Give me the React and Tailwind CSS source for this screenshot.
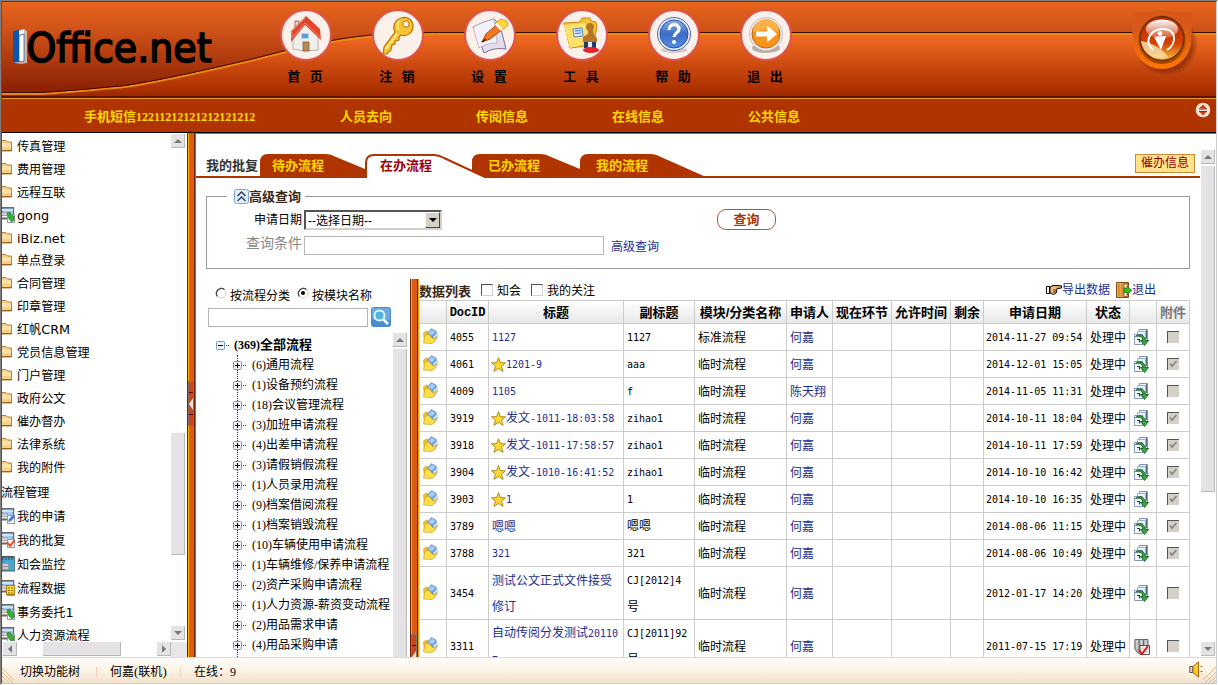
import React from "react";

/* Splits a string in CJK and Latin runs so that each gets its own face. */
function Mixed({ children, latin }) {
  const parts = String(children).match(/[\x20-\x7e]+|[^\x20-\x7e]+/g) || [];
  return parts.map((p, i) =>
    /^[\x20-\x7e]/.test(p) ? (
      <span key={i} className={latin}>{p}</span>
    ) : (
      <span key={i}>{p}</span>
    )
  );
}
const MONO = "whitespace-pre font-['DejaVu_Sans_Mono',monospace] text-[10px]";
const SERIF = "font-['Liberation_Serif',serif] text-[12px]";
const VERD = "font-['DejaVu_Sans',sans-serif] text-[12.8px]";

/* ---------- header icons ---------- */
const HomeIcon = () => (
  <svg width="34" height="40" viewBox="0 0 34 40">
    <path d="M4 20 L16 8 L29 20 V35 L16 36 L4 34Z" fill="#f1efec" stroke="#b5aea6" />
    <path d="M6 6h4v10l-4 3z" fill="#d9d4cf" stroke="#a33" strokeWidth=".7" />
    <path d="M2 16 V27 L16 10 L32 25 L31 14 L17 1Z" fill="#e2452c" />
    <path d="M16 3 L3 16 V23 L16 8 L31 22" fill="none" stroke="#f58a6c" />
    <rect x="12.500" y="18.500" width="7" height="5" fill="#5a9be0" stroke="#b9d4ee" />
    <rect x="14" y="27" width="6" height="9" fill="#b88a58" stroke="#7b5a38" strokeWidth=".7" />
  </svg>
);
const KeyIcon = () => (
  <svg width="34" height="40" viewBox="0 0 34 40">
    <path d="M20 3c7-2 12 2 12 8 0 7-6 11-12 9l-2 2v3l-4 1v3l-3 1-1 5-4 4H2l1-7L14 17c-3-6 0-12 6-14z" fill="#f6c431" stroke="#b87408" strokeWidth="1.200" />
    <path d="M5 34 L16 19M18 6c-2 3-2 6 0 9" stroke="#fff0a0" strokeWidth="1.500" fill="none" />
    <circle cx="25" cy="9" r="3.200" fill="#fdeeda" stroke="#b87408" />
  </svg>
);
const SetIcon = () => (
  <svg width="40" height="40" viewBox="0 0 40 40">
    <path d="M3 12 Q12 7 24 4 L30 10 L36 34 Q24 32 14 38 Q10 24 3 12Z" fill="#e2ddec" stroke="#776f93" />
    <path d="M3 12 Q12 7 24 4 L27 28 Q16 28 9 33Z" fill="#f4f1f8" stroke="#9d96b4" strokeWidth=".6" />
    <path d="M12 27 L16 19 29 8 34 13 20 24Z" fill="#f17a22" stroke="#a84008" />
    <path d="M25 8 L31 4 37 6 38 10 34 14 31 14Z" fill="#ffd23c" stroke="#c48006" strokeWidth=".6" />
    <path d="M26 9l6 6" stroke="#fff" strokeWidth="2.500" />
    <path d="M12 27l4-3" stroke="#43250f" strokeWidth="1.500" />
  </svg>
);
const ToolIcon = () => (
  <svg width="40" height="40" viewBox="0 0 40 40">
    <path d="M2 8 L18 7 L20 3 L28 3 L29 6 L34 7 L35 12 L31 30 L8 33Z" fill="#f6c53a" stroke="#c8870e" />
    <path d="M2 10 L24 8 L29 28 L8 33Z" fill="#ffe06a" />
    <path d="M11 14l9-1 1 8-9 1z" fill="#dbe9fb" stroke="#5a86c4" />
    <path d="M13 16l6-.5M13 18.500l6-.5" stroke="#3a6cc0" />
    <circle cx="28" cy="12" r="4" fill="#b87528" />
    <path d="M26 15h5l1 5 3 3v4H21v-5l5-3z" fill="#b87528" />
    <path d="M22 27h12v6H22z" fill="#223a6c" />
    <path d="M26 27h4v6h-4z" fill="#e8e8f0" />
    <ellipse cx="29" cy="35" rx="8" ry="3" fill="#e8232b" />
  </svg>
);
const HelpIcon = () => (
  <svg width="40" height="40" viewBox="0 0 40 40">
    <defs><linearGradient id="hb" x1="0" y1="0" x2="0" y2="1"><stop offset="0" stopColor="#8fb2e8" /><stop offset=".5" stopColor="#3c6ac4" /><stop offset="1" stopColor="#5a90e4" /></linearGradient></defs>
    <ellipse cx="20" cy="35" rx="13" ry="3" fill="#d8c8c4" />
    <circle cx="20" cy="19" r="16.500" fill="#e8edf6" stroke="#4a6cb0" />
    <circle cx="20" cy="19" r="14" fill="url(#hb)" stroke="#2b52a4" />
    <path d="M15 15c0-7 10-7 10-1 0 4-5 4-5 8" fill="none" stroke="#fff" strokeWidth="3.200" />
    <circle cx="20" cy="27" r="2" fill="#fff" />
  </svg>
);
const ExitIcon = () => (
  <svg width="44" height="42" viewBox="0 0 44 42">
    <ellipse cx="22" cy="34" rx="14" ry="5" fill="#b9aca8" />
    <circle cx="22" cy="20" r="16.500" fill="#eeeaea" stroke="#c9c1c0" />
    <circle cx="22" cy="20" r="14" fill="#f8941e" stroke="#c4650c" />
    <path d="M9 18a13 13 0 0 1 26 0c-8-3-18-3-26 0z" fill="#fdb045" />
    <path d="M12 17.500h11v-6l10 8.500-10 8.500v-6H12z" fill="#fff" />
  </svg>
);

/* ---------- small icons ---------- */
const Folder = () => (
  <svg width="10" height="13" viewBox="0 0 10 13">
    <path d="M0 1.500 H4 L5.500 3 H9.500 V12 H0" fill="#f8cf86" stroke="#b8823c" />
    <path d="M0 5H9" stroke="#fff0cc" />
    <path d="M0 6h9v2H0z" fill="#ffe3a6" />
    <path d="M0 11.500h10" stroke="#9a6220" />
  </svg>
);
const AppIcon = ({ kind }) => (
  <svg width="13" height="16" viewBox="0 0 13 16">
    <path d="M0 .8h11.500v11H0z" fill="#9fc9f0" stroke="#6b6b6b" strokeWidth="1.400" />
    <path d="M0 2h11v2H0z" fill="#c8e2fb" />
    <path d="M0 5h6v6H0z" fill="#a8a8a8" />
    <path d="M0 7h5M0 9.500h5" stroke="#fff" />
    {kind !== "cal" && <rect x="5.500" y="7.500" width="7" height="8" fill="#f4f4fc" stroke="#9a9ab0" />}
    {kind === "add" && <path d="M5 6l3-1 1 3 3 1v4l-2 2-3-3z" fill="#2fb32f" stroke="#187818" strokeWidth=".6" />}
    {kind === "edit" && <path d="M6 14l1-3 4-4 2 2-4 4z" fill="#3d74dc" />}
    {kind === "check" && <path d="M5 10l3 4 5-6" fill="none" stroke="#e8501c" strokeWidth="2" />}
    {kind === "cal" && <><path d="M0 1h13v14H0z" fill="#45a7d8" stroke="#555" /><path d="M1 0v4M4 0v4M7 0v4M10 0v4" stroke="#444" /><path d="M0 7h7v7H0z" fill="#999" /><path d="M1 9h5M1 12h5" stroke="#fff" /></>}
    {kind === "data" && <><rect x="4.500" y="5.500" width="8" height="9" fill="#ffd83a" stroke="#a87e08" /><path d="M6 8h5M6 10.500h5M6 13h5" stroke="#8a6a08" strokeDasharray="2 1" /></>}
  </svg>
);
const DocIcon = () => (
  <svg width="16" height="16" viewBox="0 0 16 16">
    <path d="M.5 5l3-2 2 1v5l-4 5z" fill="#f5c020" stroke="#c8951c" strokeWidth=".6" />
    <path d="M4 5L8.500.500 13 3l2 6-4 5-5-4z" fill="#5f9ce2" stroke="#8e9db8" strokeWidth=".6" />
    <path d="M5 5l4-3.500L12.500 4 9 7.500z" fill="#a8ccf4" />
    <path d="M10 9l4-4 1 4-3 3z" fill="#d4e6fa" />
    <path d="M.5 15L2 7.500 5.500 6 10 11l3.500-2.500L12 13l-3 2.500z" fill="#ffe04c" stroke="#d4a01c" strokeWidth=".7" />
  </svg>
);
const Star = () => (
  <svg width="15" height="15" viewBox="0 0 15 15" className="shrink-0">
    <path d="M7.500 .7l1.900 4.900 5.100.2-4 3.400 1.600 5.200-4.600-3-4.600 3 1.600-5.200-4-3.400 5.100-.2z" fill="#ffd92c" stroke="#b07a1c" strokeWidth=".9" />
  </svg>
);
const FlowIcon = () => (
  <svg width="15" height="17" viewBox="0 0 15 17">
    <path d="M5.500.500h8v11h-8z" fill="#e8f2fc" stroke="#7f95b4" />
    <path d="M3.500 2.500h8v11h-8z" fill="#e8f2fc" stroke="#9cb0cc" />
    <path d="M.5 5.500h8v10h-8z" fill="#f6faff" stroke="#8499b8" />
    <path d="M12.500 1v9" stroke="#5c6c80" />
    <path d="M1.500 7.500c3-3 9-2.500 10 4h3l-4 5-4-5h2.500c-.5-4-4-5-7.500-4z" fill="#38a83c" stroke="#0c561c" strokeWidth=".8" />
    <path d="M3 10.500h2.500v3" fill="none" stroke="#244" strokeWidth="1.200" />
  </svg>
);
const BookIcon = () => (
  <svg width="16" height="17" viewBox="0 0 16 17">
    <path d="M1 1.500h13v10l-3 3.500H4L.8 11z" fill="#b5b5b5" stroke="#666" />
    <path d="M5 1v11M9.500 1v11" stroke="#6c6c6c" /><path d="M3 2v9M7.500 2v9M12 2v9" stroke="#e4e4e4" />
    <path d="M6 7.500h9.500v9H6z" fill="#fff" stroke="#555" /><path d="M6 11h9M6 14h9M9 8v8M12 8v8" stroke="#aaa" strokeWidth=".6" />
    <path d="M5 12l3 4 6-8" fill="none" stroke="#e01818" strokeWidth="2" />
  </svg>
);
const Arrow = ({ dir }) => (
  <svg width="8" height="8" viewBox="0 0 8 8" fill="#7a7a7a">
    {dir === "up" && <path d="M4 2l4 4H0z" />}
    {dir === "down" && <path d="M0 2h8L4 6z" />}
    {dir === "left" && <path d="M6 0v8L2 4z" />}
    {dir === "right" && <path d="M2 0l4 4-4 4z" />}
  </svg>
);
const SB = ({ dir, c = "w-[14px]" }) => (
  <div className={`${c} flex h-[14px] shrink-0 items-center justify-center border-r border-b border-[#b8b8b8] bg-[#e4e2e4]`}>
    <Arrow dir={dir} />
  </div>
);
const Box = () => (
  <span className="block h-3 w-3 border border-t-[#555] border-l-[#555] border-r-[#d4d0c8] border-b-[#d4d0c8] bg-white" />
);
const Radio = ({ on }) => (
  <svg width="12" height="12" viewBox="0 0 12 12">
    <circle cx="6" cy="6" r="5" fill="#fff" stroke="#d4d0c8" />
    <path d="M2.500 9.500A5 5 0 0 1 9.500 2.500" fill="none" stroke="#444" strokeWidth="1.200" />
    {on && <circle cx="6" cy="6" r="2" fill="#000" />}
  </svg>
);
const Handle = ({ c }) => (
  <div className={`${c} flex w-[6px] flex-col items-center overflow-hidden border border-[#8a7068] bg-[#c8441c]`}>
    <div className="h-[11px] w-full shrink-0 border-b border-[#400]" />
    <svg width="4" height="20" viewBox="0 0 4 20" className="shrink-0"><path d="M4 5v12L0 11z" fill="#fbe0d0" /></svg>
    <div className="mt-auto h-[11px] w-full shrink-0 border-t border-[#400]" />
  </div>
);

const NAV = [
  ["首 页", HomeIcon], ["注 销", KeyIcon], ["设 置", SetIcon],
  ["工 具", ToolIcon], ["帮 助", HelpIcon], ["退 出", ExitIcon],
];

function Header() {
  return (
    <header className="h-[131px] shrink-0">
      <div className="relative flex h-[94px] overflow-hidden">
        <svg className="absolute inset-0" width="1214" height="94" viewBox="2 2 1214 94">
          <defs>
            <linearGradient id="up" gradientUnits="userSpaceOnUse" x1="0" y1="2" x2="0" y2="94">
              <stop offset="0" stopColor="#e8651c" /><stop offset=".33" stopColor="#cc5017" /><stop offset="1" stopColor="#881e02" />
            </linearGradient>
            <linearGradient id="lo" gradientUnits="userSpaceOnUse" x1="0" y1="34" x2="0" y2="96">
              <stop offset="0" stopColor="#f26c22" /><stop offset=".5" stopColor="#cc4a10" /><stop offset=".9" stopColor="#ac3000" /><stop offset="1" stopColor="#982800" />
            </linearGradient>
            <linearGradient id="orb" x1="0" y1="0" x2="0" y2="1"><stop offset="0" stopColor="#d8581a" /><stop offset=".3" stopColor="#d8581a" /><stop offset="1" stopColor="#ff7600" /></linearGradient>
            <linearGradient id="ring" x1="0" y1="0" x2="0" y2="1"><stop offset="0" stopColor="#e06c08" /><stop offset="1" stopColor="#a04400" /></linearGradient>
            <linearGradient id="ball" x1="0" y1="0" x2="0" y2="1"><stop offset="0" stopColor="#b82800" /><stop offset=".6" stopColor="#d04000" /><stop offset="1" stopColor="#f6c040" /></linearGradient>
            <linearGradient id="shine" x1="0" y1="0" x2="0" y2="1"><stop offset="0" stopColor="#fff" /><stop offset="1" stopColor="#fff" stopOpacity=".15" /></linearGradient>
            <radialGradient id="drop"><stop offset=".8" stopColor="#6a2000" stopOpacity=".55" /><stop offset="1" stopColor="#6a2000" stopOpacity="0" /></radialGradient>
          </defs>
          <rect x="2" y="2" width="1214" height="94" fill="url(#up)" />
          <path d="M2 94H38C62 93 100 89 125 87C170 80 215 69 250 61C285 52 320 43 350 39C380 35 400 34 440 34H1216V96H2Z" fill="url(#lo)" />
          <path d="M2 94H38C62 93 100 89 125 87C170 80 215 69 250 61C285 52 320 43 350 39C380 35 400 34 440 34H1216" fill="none" stroke="#ee8810" strokeWidth="2" />
          <path d="M2 92.500H38C62 91.500 100 88 125 85.500C170 78.500 215 67.500 250 59.500C285 50.500 320 41.500 350 37.500C380 33.500 400 32.500 440 32.500H1216" fill="none" stroke="#3c0c02" />
          <circle cx="1166" cy="44" r="32" fill="url(#drop)" />
          <path d="M1132 12h60v23h-60z" fill="#d8581a" opacity=".9" />
          <circle cx="1162" cy="39.500" r="29.500" fill="url(#orb)" />
          <circle cx="1162" cy="40" r="24" fill="url(#ring)" />
          <circle cx="1162" cy="38.500" r="22" fill="url(#ball)" stroke="#6c3000" strokeWidth="1.500" />
          <path d="M1141 41c10 1 22 8 27 16-4 2-10 2-15 0-7-3-11-9-12-16z" fill="#fde0b0" opacity=".8" />
          <ellipse cx="1162" cy="29" rx="16" ry="9.500" fill="url(#shine)" />
          <path d="M1153 50C1144 42 1149 30 1162 29C1176 28 1178 43 1167 50" fill="none" stroke="#fff" strokeWidth="2" />
          <circle cx="1160" cy="33.500" r="2.300" fill="#fff" />
          <path d="M1154 37q6-1 12-1l-5 14z" fill="#fff" />
          <path d="M16 31l8-2 3 2v32l-6 1-6-1z" fill="#d4cfcc" opacity=".8" />
          <path d="M13 31l6-1v32l-6 .5z" fill="#0b57b0" />
          <path d="M19 31l5-1.500v4l-5 1.500z" fill="#fff" />
          <path d="M19 35.500l5-1.500v27l-5 1z" fill="#fff" stroke="#0b57b0" strokeWidth=".7" />
          <text x="26.500" y="62" textLength="185" lengthAdjust="spacingAndGlyphs" fill="#000" stroke="#000" strokeWidth="1.700" fontFamily="DejaVu Sans" fontSize="41">Office.net</text>
        </svg>
        <nav className="relative flex pl-[258px]">
          {NAV.map(([t, Icon]) => (
            <div key={t} className="flex w-[92px] flex-col items-center pt-[7px]">
              <div className="flex h-[52px] w-[52px] items-center justify-center rounded-full border-2 border-[#e0524c] bg-[#fcf0ea]">
                <Icon />
              </div>
              <div className="mt-[7px] pr-[2px] text-[13px] leading-[17px] font-bold text-black [word-spacing:6px]">{t}</div>
            </div>
          ))}
        </nav>
      </div>
      <div className="h-[2px] bg-[#5c1400]" />
      <div className="h-px bg-[#f09a10]" />
      <div className="flex h-[33px] items-center bg-[#b03400] pt-[3px] pl-[82px] text-[13px] font-bold text-[#ffd800]">
        <div className="w-[256px] leading-[18px]"><Mixed latin={SERIF}>手机短信12211212121212121212</Mixed></div>
        {["人员去向", "传阅信息", "在线信息", "公共信息"].map((t) => (
          <div key={t} className="w-[136px] leading-[18px]">{t}</div>
        ))}
        <svg className="mr-[5px] mb-[14px] ml-auto" width="16" height="16" viewBox="0 0 16 16">
          <circle cx="8" cy="8" r="7.300" fill="#f6e2d8" /><path d="M8 2.500l4 4H4zM8 13.500l4-4H4z" fill="#c84414" /><path d="M4 7h8M4 9.500h8" stroke="#8a3010" />
        </svg>
      </div>
      <div className="h-px bg-black" />
    </header>
  );
}

const MENU = [
  ["传真管理", "h-[23px]"], ["费用管理", "h-[23px]"], ["远程互联", "h-[23px]"], ["gong", "h-[23px]", "add"], ["iBiz.net", "h-[22px]"],
  ["单点登录", "h-[23px]"], ["合同管理", "h-[23px]"], ["印章管理", "h-[23px]"], ["红帆CRM", "h-[23px]"], ["党员信息管理", "h-[23px]"],
  ["门户管理", "h-[23px]"], ["政府公文", "h-[23px]"], ["催办督办", "h-[23px]"], ["法律系统", "h-[23px]"], ["我的附件", "h-[23px]"],
  ["流程管理", "h-[25px]", "none"], ["我的申请", "h-[24px]", "edit"], ["我的批复", "h-[24px]", "check"], ["知会监控", "h-[24px]", "cal"],
  ["流程数据", "h-[24px]", "data"], ["事务委托1", "h-[25px]", "add"], ["人力资源流程", "h-[21px]", "add"],
];

function Sidebar() {
  return (
    <aside className="flex h-full w-[185px] shrink-0 flex-col bg-white">
      <div className="flex h-[508px] overflow-hidden">
        <div className="w-[169px] overflow-hidden pt-[3px]">
          {MENU.map(([t, h, kind], i) => (
            <div key={i} className={`${h} flex items-center text-[12.100px] leading-none whitespace-nowrap text-black`}>
              {kind !== "none" && (
                <span className={kind ? "w-[15px] pb-[3px]" : "w-[15px] pb-[4px]"}>{kind ? <AppIcon kind={kind} /> : <Folder />}</span>
              )}
              <span className={kind === "none" ? "ml-[-1px] pt-[2px]" : ""}><Mixed latin={VERD}>{t}</Mixed></span>
            </div>
          ))}
        </div>
        <div className="flex w-[16px] flex-col bg-white pt-[1px] pb-px">
          <SB dir="up" />
          <div className="mt-[285px] h-[122px] w-[14px] border-r border-b border-[#b8b8b8] bg-[#e4e2e4]" />
          <div className="mt-auto"><SB dir="down" /></div>
        </div>
      </div>
      <div className="flex h-[16px] pt-px pl-[1px]">
        <SB dir="left" />
        <div className="ml-[26px] h-[14px] w-[78px] border-r border-b border-[#b8b8b8] bg-[#e4e2e4]" />
        <div className="ml-auto"><SB dir="right" /></div>
        <div className="h-[15px] w-[16px] bg-[#e8e6e8]" />
      </div>
    </aside>
  );
}

function Tabs() {
  return (
    <div className="relative flex h-[28px] items-center">
      <svg className="absolute inset-0" width="1005" height="28" viewBox="196 150 1005 28">
        <path d="M196 176h1004v2H196z" fill="#b03400" />
        <path d="M260 178V162Q260 154 268 154H326Q331 154 336 157L365 169V178Z" fill="#b03400" />
        <path d="M472 178V162Q472 154 480 154H541Q546 154 551 157L580 169V178Z" fill="#b03400" />
        <path d="M580 178V162Q580 154 588 154H651Q656 154 661 157L706 177V178Z" fill="#b03400" />
        <path d="M366.500 178V163Q366.500 155 374.500 155H434Q439 155 444 158L487 178Z" fill="#fff" />
        <path d="M366 178V163Q366 155 374 155H434Q439 155 444 158L487 178" fill="none" stroke="#b03400" strokeWidth="2" />
      </svg>
      <div className="relative flex pt-[3px] text-[13px] leading-[18px] font-bold">
        <span className="w-[76px] pl-[10px] text-[#333]">我的批复</span>
        <span className="w-[108px] text-[#ffd800]">待办流程</span>
        <span className="w-[108px] text-[#a00008]">在办流程</span>
        <span className="w-[108px] text-[#ffd800]">已办流程</span>
        <span className="w-[108px] text-[#ffd800]">我的流程</span>
      </div>
      <button className="relative mr-[6px] mb-[2px] ml-auto h-[19px] w-[60px] border border-[#d08a34] bg-[#ffe48c] text-[12px] leading-[17px] text-[#980008]">催办信息</button>
    </div>
  );
}

function Filter() {
  return (
    <section className="relative mt-[18px] ml-[10px] h-[73px] w-[984px] border border-[#999]">
      <div className="absolute -top-[9px] left-[20px] flex h-[17px] w-[78px] items-center bg-white pl-[7px]">
        <svg width="15" height="15" viewBox="0 0 15 15"><rect x=".5" y=".5" width="14" height="14" rx="2" fill="#e0eefb" stroke="#7ea6cc" /><path d="M3.500 7l4-4 4 4M3.500 12l4-4 4 4" fill="none" stroke="#2a3c5c" strokeWidth="1.400" /></svg>
        <span className="text-[13px] leading-[17px] font-bold whitespace-nowrap text-[#3c2818]">高级查询</span>
      </div>
      <div className="mt-[13px] flex h-[19px] items-center text-[12px]">
        <span className="w-[97px] pr-[2px] text-right leading-[18px] text-black">申请日期</span>
        <div className="flex h-[20px] w-[138px] items-center border-2 border-t-[#555] border-l-[#555] border-r-[#d4d0c8] border-b-[#d4d0c8] bg-white pl-[2px] text-black">
          <span className="pt-[2px] leading-[16px]">--选择日期--</span>
          <span className="ml-auto flex h-[16px] w-[15px] items-center justify-center border border-t-white border-l-white border-r-[#444] border-b-[#444] bg-[#d4d0c8]">
            <svg width="8" height="4" viewBox="0 0 8 4"><path d="M0 0h8L4 4z" fill="#000" /></svg>
          </span>
        </div>
        <button className="ml-[275px] h-[21px] w-[59px] rounded-[9px] border border-[#c05028] text-[13px] leading-[18px] font-bold text-[#b03400]">查询</button>
      </div>
      <div className="mt-[7px] flex h-[19px] items-center">
        <span className="-mt-[6px] w-[97px] pr-[2px] text-right text-[14px] leading-[18px] text-[#888]">查询条件</span>
        <div className="h-[19px] w-[300px] border border-[#b8b8b8] bg-white" />
        <a className="ml-[7px] pt-[2px] text-[12px] leading-[18px] text-[#1c2e90]">高级查询</a>
      </div>
    </section>
  );
}

const TREE = [
  "(6)通用流程", "(1)设备预约流程", "(18)会议管理流程", "(3)加班申请流程", "(4)出差申请流程", "(3)请假销假流程", "(1)人员录用流程",
  "(9)档案借阅流程", "(1)档案销毁流程", "(10)车辆使用申请流程", "(1)车辆维修/保养申请流程", "(2)资产采购申请流程",
  "(1)人力资源-薪资变动流程", "(2)用品需求申请", "(4)用品采购申请",
];
const Node = ({ minus }) => (
  <svg width="13" height="9" viewBox="0 0 13 9" className="shrink-0">
    <rect x=".5" y=".5" width="8" height="8" rx="1" fill="#eef2f6" stroke="#7496b8" />
    <path d={minus ? "M2 4.500h5" : "M2 4.500h5M4.500 2v5"} stroke="#000" />
    <path d="M10 4.500h1M12 4.500h1" stroke="#333" />
  </svg>
);

function TreePane() {
  return (
    <div className="flex h-full w-[214px] shrink-0 flex-col overflow-hidden pt-[8px]">
      <div className="flex h-[15px] items-start pl-[19px] text-[12px] leading-[18px] text-black">
        <Radio /><span className="w-[70px] pl-[3px]">按流程分类</span>
        <Radio on /><span className="pl-[3px]">按模块名称</span>
      </div>
      <div className="mt-[5px] flex h-[20px] shrink-0 items-center pl-[12px]">
        <div className="h-[19px] w-[160px] border border-[#b4b4b4]" />
        <svg className="ml-[3px]" width="20" height="20" viewBox="0 0 20 20">
          <rect width="20" height="20" rx="3" fill="#4a8ccc" /><rect x="1" y="1" width="18" height="12" rx="2" fill="#6ea8dc" />
          <circle cx="8.500" cy="8.500" r="5" fill="#48b4e8" stroke="#eaf8ff" strokeWidth="1.800" /><path d="M12.500 12.500l4.500 4.500" stroke="#eaf8ff" strokeWidth="3" />
        </svg>
      </div>
      <div className="mt-[6px] flex min-h-0 flex-1">
        <div className="w-[197px] overflow-hidden pt-[2px] text-[12px] text-black">
          <div className="flex h-[20px] items-center pl-[20px]">
            <Node minus />
            <span className="pl-[5px] text-[13px] leading-[20px] font-bold"><Mixed latin={SERIF}>(369)全部流程</Mixed></span>
          </div>
          <div className="relative ml-[37px]">
            <div className="absolute top-0 left-[4px] h-[302px] border-l border-dotted border-[#333]" />
            {TREE.map((t) => (
              <div key={t} className="relative -ml-[4px] flex h-[20px] items-center pl-[4px] whitespace-nowrap">
                <Node />
                <span className="pl-[6px] leading-[20px]"><Mixed latin={SERIF}>{t}</Mixed></span>
              </div>
            ))}
          </div>
        </div>
        <div className="w-[14px]">
          <SB dir="up" />
          <div className="mt-[2px] h-[320px] w-[14px] border-r border-[#b8b8b8] bg-[#e4e2e4]" />
        </div>
      </div>
    </div>
  );
}

const COLS = "grid grid-cols-[27px_42px_135px_71px_92px_46px_59px_59px_33px_103px_43px_27px_33px]";
const HEADS = ["", "DocID", "标题", "副标题", "模块/分类名称", "申请人", "现在环节", "允许时间", "剩余", "申请日期", "状态", "", "附件"];
const ROWS = [
  ["4055", 0, ["1127"], ["1127"], "标准流程", "何嘉", "2014-11-27 09:54", 0],
  ["4061", 1, ["1201-9"], ["aaa"], "临时流程", "何嘉", "2014-12-01 15:05", 1],
  ["4009", 0, ["1105"], ["f"], "临时流程", "陈天翔", "2014-11-05 11:31", 0],
  ["3919", 1, ["发文-1011-18:03:58"], ["zihao1"], "临时流程", "何嘉", "2014-10-11 18:04", 1],
  ["3918", 1, ["发文-1011-17:58:57"], ["zihao1"], "临时流程", "何嘉", "2014-10-11 17:59", 1],
  ["3904", 1, ["发文-1010-16:41:52"], ["zihao1"], "临时流程", "何嘉", "2014-10-10 16:42", 1],
  ["3903", 1, ["1"], ["1"], "临时流程", "何嘉", "2014-10-10 16:35", 1],
  ["3789", 0, ["嗯嗯"], ["嗯嗯"], "临时流程", "何嘉", "2014-08-06 11:15", 1],
  ["3788", 0, ["321"], ["321"], "临时流程", "何嘉", "2014-08-06 10:49", 1],
  ["3454", 0, ["测试公文正式文件接受", "修订"], ["CJ[2012]4", "号"], "临时流程", "何嘉", "2012-01-17 14:20", 0],
  ["3311", 0, ["自动传阅分发测试20110", "7"], ["CJ[2011]92", "号"], "临时流程", "何嘉", "2011-07-15 17:19", 0],
];
const Cell = ({ children, c = "pl-[3px]" }) => (
  <div className={`${c} flex items-center overflow-hidden border-r border-[#ccc] whitespace-nowrap`}>{children}</div>
);
const Lines = ({ l, c = "" }) => (
  <div className={c}>
    {l.map((t) => (
      <div key={t} className="leading-[26px]"><Mixed latin={MONO}>{t}</Mixed></div>
    ))}
  </div>
);

function DataPane() {
  return (
    <div className="h-full w-[771px] overflow-hidden">
      <div className="flex h-[21px] items-center text-[12px] leading-[17px] text-black">
        <span className="w-[62px] pt-[3px] text-[13px] font-bold text-[#3c2818]">数据列表</span>
        <Box /><span className="w-[38px] pt-[4px] pl-[4px]">知会</span>
        <Box /><span className="pt-[4px] pl-[4px]">我的关注</span>
        <div className="mr-[34px] ml-auto flex items-center text-[#1c2e90]">
          <svg width="16" height="10" viewBox="0 0 16 10"><path d="M.5 1.500h3v7h-3z" fill="#fff" stroke="#000" /><path d="M4 2l3-1.500 8.500.3V3L11 3.500l-.5 4-3 2L4 8z" fill="#f4b878" stroke="#000" /><path d="M7 5h3M7 7h3" stroke="#000" strokeWidth=".7" /></svg>
          <span className="pt-[2px] pr-[6px] leading-[19px]">导出数据</span>
          <svg width="16" height="16" viewBox="0 0 16 16"><path d="M.5.500h12v15H.5z" fill="#c9822c" stroke="#8a4c10" /><path d="M1 1h7v14H1z" fill="#eaa84a" /><path d="M3 2v12M6 2v12" stroke="#c27a22" /><path d="M8 1l4 2v11l-4 1z" fill="#f8e8d0" stroke="#8c3c14" strokeWidth=".8" /><path d="M8 6h3V4l5 4.500-5 4.500v-2.500H8z" fill="#38b428" stroke="#167010" strokeWidth=".6" /></svg>
          <span className="pt-[2px] leading-[19px]">退出</span>
        </div>
      </div>
      <div className="border-t border-l border-[#ccc] text-[12px] text-black">
        <div className={`${COLS} h-[23px] border-b border-[#ccc] bg-linear-to-b from-white to-[#e8e8e8] text-[13px] font-bold`}>
          {HEADS.map((h, i) => (
            <Cell key={i} c={i === 12 ? "justify-center pt-px text-[#777]" : "justify-center pt-px"}>
              {i === 1 ? <span className="font-['Liberation_Mono',monospace] text-[12px] tracking-[-0.1px]">{h}</span> : <span>{h}</span>}
            </Cell>
          ))}
        </div>
        {ROWS.map(([id, star, title, sub, mod, who, date, att], i) => (
          <div key={id} className={`${COLS} ${title.length > 1 ? "h-[53px]" : "h-[27px]"} border-b border-[#ccc]`}>
            <Cell><span className="pb-[2px]"><DocIcon /></span></Cell>
            <Cell><Lines l={[id]} /></Cell>
            <Cell c="pl-[2px] text-[#1c2e90]">{star ? <Star /> : <span className="w-px" />}<Lines l={title} c="pt-px" /></Cell>
            <Cell><Lines l={sub} /></Cell>
            <Cell c="pt-[2px] pl-[3px]">{mod}</Cell>
            <Cell c="pt-[2px] pl-[3px] text-[#1c2e90]">{who}</Cell>
            <Cell /><Cell /><Cell />
            <Cell c="pl-[2px]"><Lines l={[date]} /></Cell>
            <Cell c="pt-[2px] pl-[3px]">处理中</Cell>
            <Cell c="pl-[4px]">{i === 10 ? <BookIcon /> : <FlowIcon />}</Cell>
            <Cell c="justify-center">
              <svg width="12" height="12" viewBox="0 0 12 12"><path d="M0 0h12v12H0z" fill="#d4d0c8" /><path d="M0 .5h12M.5 0v12" stroke="#555" />{att ? <path d="M3 5.500l2 2.500 4.500-5" fill="none" stroke="#888" strokeWidth="1.800" /> : null}</svg>
            </Cell>
          </div>
        ))}
      </div>
    </div>
  );
}

export default function App() {
  return (
    <div className="h-[685px] w-[1218px] overflow-hidden border border-t-[#808080] border-l-[#808080] border-r-white border-b-white bg-white font-['Liberation_Sans','Noto_Sans_CJK_SC',sans-serif]">
      <div className="flex h-[683px] w-[1216px] flex-col border border-t-[#404040] border-l-[#505050] border-r-[#d0ccc8] border-b-[#d0ccc8]">
        <Header />
        <main className="flex h-[524px] shrink-0 overflow-hidden">
          <Sidebar />
          <div className="flex w-[8px] shrink-0 items-start border-r border-l border-[#6c2404] bg-[#dc5c14]">
            <div className="h-full w-px bg-[#ffb000]" />
            <Handle c="mt-[248px] h-[45px] -ml-px" />
          </div>
          <div className="flex h-full w-[1021px] border-t border-l border-[#a87414] pt-[16px]">
            <div className="flex h-full w-[1005px] flex-col">
              <Tabs />
              <Filter />
              <div className="mt-[10px] flex h-[378px] overflow-hidden">
                <TreePane />
                <div className="flex w-[9px] shrink-0 items-end border-r border-l border-r-[#e8a418] border-l-[#6c2404] bg-[#dc5c14]">
                  <div className="h-full w-px bg-[#ffb000]" />
                  <Handle c="-mb-[22px] h-[45px] -ml-px" />
                  <div className="h-full w-px bg-[#6c2404]" />
                </div>
                <DataPane />
              </div>
            </div>
            <div className="flex h-[507px] w-[15px] flex-col">
              <SB dir="up" />
              <div className="mt-[2px] h-[326px] w-[14px] border-r border-b border-[#b8b8b8] bg-[#e4e2e4]" />
              <div className="mt-auto mb-px"><SB dir="down" /></div>
            </div>
          </div>
        </main>
        <footer className="flex h-[26px] shrink-0 items-center border-t border-[#f0d8b4] bg-linear-to-b from-[#fffdfa] via-[#fbf3e6] to-[#f3e3cb] pt-[2px] text-[12px] leading-[18px] text-black">
          <svg width="12" height="24" viewBox="0 0 12 24" className="mr-[6px]"><path d="M0 12l12 12M0 16l8 8M0 20l4 4M0 8l12 12" stroke="#d8c09a" /></svg>
          <span className="w-[76px]">切换功能树</span>
          <span className="mr-[13px] h-[10px] w-px bg-[#efcdb8]" />
          <span className="w-[70px]"><Mixed latin="font-['Liberation_Serif',serif] text-[13px]">何嘉(联机)</Mixed></span>
          <span className="mr-[13px] h-[10px] w-px bg-[#efcdb8]" />
          <span><Mixed latin={SERIF}>在线：9</Mixed></span>
          <svg className="mb-[4px] ml-auto" width="14" height="17" viewBox="0 0 14 17"><path d="M.8 5.500h3v6h-3z" fill="#d8d8e0" stroke="#555" /><path d="M4 5.500L9.500.8v15.400L4 11.500z" fill="#ffc820" stroke="#a86a00" /><path d="M11.500 5.500h2M11.500 10.500h2" stroke="#a86a00" /></svg>
          <svg width="13" height="24" viewBox="0 0 13 24"><path d="M1 24L13 12M5 24l8-8M9 24l4-4M0 20L13 7" stroke="#d8b890" /></svg>
        </footer>
      </div>
    </div>
  );
}
